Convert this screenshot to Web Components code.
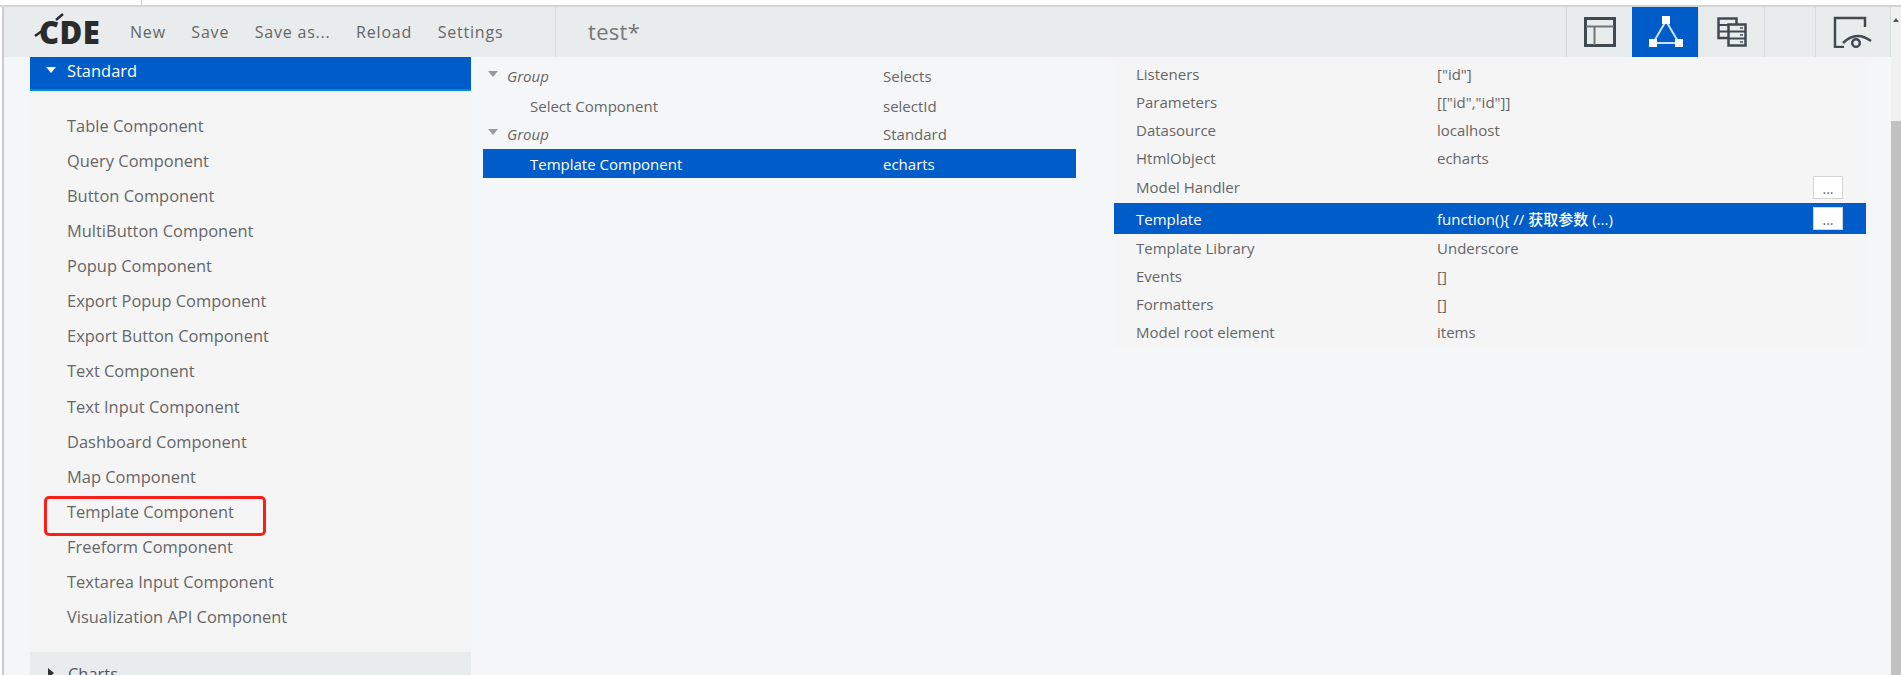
<!DOCTYPE html>
<html>
<head>
<meta charset="utf-8">
<title>CDE</title>
<style>
  html, body { margin: 0; height: 100%; overflow: hidden; background: #fff; }
  body { font-family: "Open Sans", "Noto Sans CJK SC", sans-serif; }
</style>
</head>
<body>
<cde-app></cde-app>

<script>
// top bar
class CdeToolbar extends HTMLElement {
  connectedCallback() {
    this.attachShadow({ mode: 'open' });
    this.shadowRoot.innerHTML = `
      <style>
        :host { display: flex; height: 50px; background: #e9eced; color: #555; align-items: stretch; flex: none; }
        .logo { width: 98px; display: flex; align-items: center; flex: none; box-sizing: border-box; position: relative; }
        .logo span { font: 800 31px "Open Sans", sans-serif; color: #2b2b2b; letter-spacing: .5px; margin-left: 35px; }
        .logo svg { position: absolute; left: 28px; top: 6px; }
        nav { display: flex; width: 453px; flex: none; align-items: center; gap: 25.500px; font-size: 16px; letter-spacing: .8px; color: #666; box-sizing: border-box; padding-left: 28px; }
        .title { flex: 1; border-left: 1px solid #d8dcdd; padding-left: 32px; font-size: 22px; line-height: 48px; color: #777; letter-spacing: .3px; }
        .tab { width: 66px; box-sizing: border-box; border-left: 1px solid #d8dcdd; display: flex; align-items: center; justify-content: center; }
        .tab.on { background: #005cc8; border-color: #005cc8; }
        .tab.gap { width: 51px; }
        .tab.last { width: 76px; border-right: 1px solid #d8dcdd; }
      </style>
      <div class="logo">
        <svg width="40" height="30" viewBox="0 0 40 30"><path d="M3 23l7-5M31 1l-7 6" stroke="#2b2b2b" stroke-width="2.500" fill="none"/></svg>
        <span>CDE</span>
      </div>
      <nav><span>New</span><span>Save</span><span>Save as...</span><span>Reload</span><span>Settings</span></nav>
      <div class="title">test*</div>
      <div class="tab">
        <svg width="32" height="30" viewBox="0 0 32 30" fill="none" stroke="#414a50" stroke-width="3"><rect x="1.500" y="1.500" width="29" height="27"/><path d="M2 9.500h28M10.500 10v18" stroke="#6d767b" stroke-width="2"/></svg>
      </div>
      <div class="tab on">
        <svg width="36" height="32" viewBox="0 0 36 32" fill="#fff"><path d="M18 5L5 27h26z" fill="none" stroke="#cfe0f5" stroke-width="2"/><rect x="14" y="0" width="8" height="8"/><rect x="1" y="23" width="8" height="8"/><rect x="27" y="23" width="8" height="8"/></svg>
      </div>
      <div class="tab">
        <svg width="30" height="30" viewBox="0 0 30 30" fill="none" stroke="#414a50" stroke-width="2.500"><path d="M11 21H1.500V1.500H19.500V7"/><path d="M2 8h9M2 14.500h9" stroke-width="2"/><rect x="11.500" y="7.500" width="17" height="21"/><path d="M12 14.500h16M12 21.500h16" stroke-width="2"/><path d="M23 11h3M23 18h3M23 25h3" stroke="#6d767b" stroke-width="2"/></svg>
      </div>
      <div class="tab gap"></div>
      <div class="tab last">
        <svg width="40" height="32" viewBox="0 0 40 32" fill="none" stroke="#414a50" stroke-width="2.500"><path d="M32 11V2H2v29h9"/><path d="M10 27q13-13 28-2"/><circle cx="23" cy="27" r="3.800"/></svg>
      </div>
    `;
  }
}

// accordion on the left
class CdePalette extends HTMLElement {
  connectedCallback() {
    this.attachShadow({ mode: 'open' });
    const items = ['Table', 'Query', 'Button', 'MultiButton', 'Popup', 'Export Popup', 'Export Button', 'Text', 'Text Input', 'Dashboard', 'Map', 'Template', 'Freeform', 'Textarea Input', 'Visualization API'];
    this.shadowRoot.innerHTML = `
      <style>
        :host { display: block; width: 441px; flex: none; background: #f5f5f6; color: #666; font-size: 16.450px; position: relative; }
        .head { height: 34px; box-sizing: border-box; background: #005cc8; border-bottom: 2px solid #0090d0; color: #fff; display: flex; align-items: center; padding: 0 0 6px 16px; gap: 11px; }
        .head i { border: 5px solid transparent; border-top: 6px solid #fff; border-bottom: 0; }
        ul { list-style: none; margin: 0; padding: 17px 0 0 37px; height: 561px; box-sizing: border-box; }
        li { height: 35.070px; line-height: 35px; }
        .closed { height: 23px; overflow: hidden; background: #e9eced; display: flex; padding: 10px 0 0 18px; gap: 14px; color: #555; box-sizing: border-box; }
        .closed i { align-self: flex-start; margin-top: 6px; border: 5px solid transparent; border-left: 6px solid #333; border-right: 0; }
        .mark { position: absolute; left: 14px; top: 439px; width: 216px; height: 34px; border: 3px solid #f8211a; border-radius: 5px; }
      </style>
      <div class="head"><i></i><span>Standard</span></div>
      <ul>${items.map(i => `<li>${i} Component</li>`).join('')}</ul>
      <div class="closed"><i></i><span>Charts</span></div>
      <div class="mark"></div>
    `;
  }
}

// component tree in the middle
class CdeTree extends HTMLElement {
  connectedCallback() {
    this.attachShadow({ mode: 'open' });
    const rows = [
      ['Group', 'Selects', 'g'], ['Select Component', 'selectId', ''],
      ['Group', 'Standard', 'g'], ['Template Component', 'echarts', 'on']
    ];
    this.shadowRoot.innerHTML = `
      <style>
        :host { display: block; width: 593px; margin-left: 12px; flex: none; padding-top: 5px; font-size: 15px; color: #666; }
        .row { height: 29px; box-sizing: border-box; display: flex; align-items: center; }
        .row.g { padding-bottom: 2px; }
        .name { width: 400px; padding-left: 47px; box-sizing: border-box; flex: none; position: relative; }
        .g .name { padding-left: 24px; font-style: italic; }
        .g .name::before { content: ''; position: absolute; left: 5px; top: 5px; border: 5px solid transparent; border-top: 6px solid #999; border-bottom: 0; }
        .on { background: #005cc8; color: #fff; font-weight: 500; }
      </style>
      ${rows.map(r => `<div class="row ${r[2]}"><span class="name">${r[0]}</span><span>${r[1]}</span></div>`).join('')}
    `;
  }
}

// properties table on the right
class CdeProps extends HTMLElement {
  connectedCallback() {
    this.attachShadow({ mode: 'open' });
    const rows = [
      ['Listeners', '["id"]'], ['Parameters', '[["id","id"]]'], ['Datasource', 'localhost'], ['HtmlObject', 'echarts'],
      ['Model Handler', '', 'btn'], ['Template', 'function(){ // 获取参数 (...)', 'btn on'],
      ['Template Library', 'Underscore', 'lib'], ['Events', '[]'], ['Formatters', '[]'], ['Model root element', 'items']
    ];
    this.shadowRoot.innerHTML = `
      <style>
        :host { display: block; width: 752px; margin: 4px 0 0 38px; flex: none; align-self: flex-start; background: #f5f5f6; font-size: 15px; color: #666; }
        .row { height: 28px; box-sizing: border-box; padding-bottom: 2px; display: flex; align-items: center; position: relative; }
        .btn { height: 30px; }
        .on { height: 31px; padding-bottom: 0; background: #005cc8; color: #fff; font-weight: 500; }
        .lib { height: 29px; }
        .name { width: 323px; padding-left: 22px; box-sizing: border-box; flex: none; }
        button { position: absolute; left: 699px; top: 3px; width: 30px; height: 23px; padding: 0; background: #fff; border: 1px solid #d5d5d5; font: 14px "Open Sans", sans-serif; color: #666; line-height: 24px; }
        .on button { top: 4px; }
      </style>
      ${rows.map(r => `<div class="row ${r[2] || ''}"><span class="name">${r[0]}</span><span>${r[1]}</span>${r[2] && r[2] !== 'lib' ? '<button>...</button>' : ''}</div>`).join('')}
    `;
  }
}

class CdeApp extends HTMLElement {
  connectedCallback() {
    this.attachShadow({ mode: 'open' });
    this.shadowRoot.innerHTML = `
      <style>
        :host { display: block; height: 675px; position: relative; overflow: hidden; }
        .strip { height: 5px; position: relative; }
        .strip::after { content: ''; position: absolute; left: 141px; top: 0; width: 1px; height: 5px; background: #ccc; }
        .frame { display: flex; height: 670px; border-top: 2px solid #d4d4d4; box-sizing: border-box; }
        .main { flex: 1; border-left: 2px solid #ccc; margin-left: 2px; min-width: 0; background: #f5f6f8; display: flex; flex-direction: column; }
        .body { display: flex; flex: 1; padding-left: 26px; min-height: 0; }
        .bar { width: 10px; flex: none; background: #f1f1f1; position: relative; }
        .bar::before { content: ''; position: absolute; left: 2px; top: 11px; border: 3px solid transparent; border-bottom: 4px solid #555; border-top: 0; }
        .bar::after { content: ''; position: absolute; left: 0; right: 0; top: 114px; bottom: 0; background: #c1c1c1; }
      </style>
      <div class="strip"></div>
      <div class="frame">
        <div class="main">
          <cde-toolbar></cde-toolbar>
          <div class="body">
            <cde-palette></cde-palette>
            <cde-tree></cde-tree>
            <cde-props></cde-props>
          </div>
        </div>
        <div class="bar"></div>
      </div>
    `;
  }
}

customElements.define('cde-toolbar', CdeToolbar);
customElements.define('cde-palette', CdePalette);
customElements.define('cde-tree', CdeTree);
customElements.define('cde-props', CdeProps);
customElements.define('cde-app', CdeApp);
</script>
</body>
</html>
